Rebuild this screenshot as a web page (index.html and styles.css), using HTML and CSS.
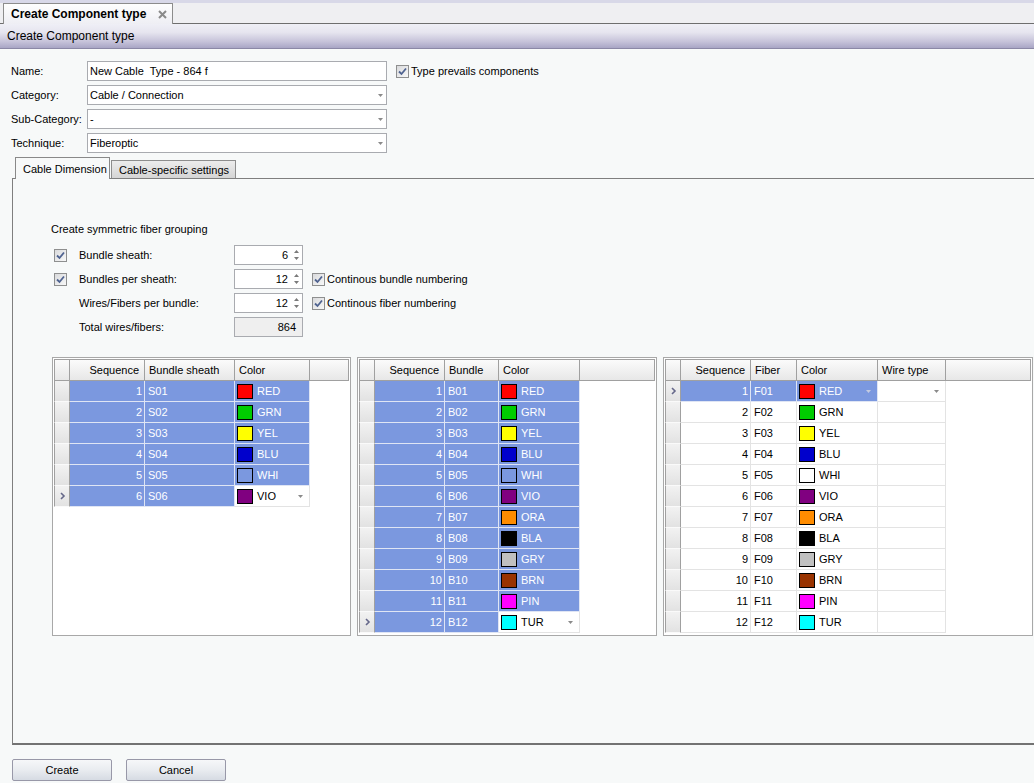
FILE: index.html
```html
<!DOCTYPE html>
<html>
<head>
<meta charset="utf-8">
<title>Create Component type</title>
<link rel="stylesheet" href="styles.css">
</head>
<body>
<div class="app">
  <div class="doctabs">
    <div class="doctab">Create Component type
      <svg class="close" width="9" height="9" viewBox="0 0 9 9"><path d="M1 1 L8 8 M8 1 L1 8" stroke="#8a8a8a" stroke-width="2"/></svg>
    </div>
  </div>
  <div class="titlebar">Create Component type</div>
  <div class="content">
    <div class="form">
      <div class="frow">
        <label>Name:</label>
        <div class="field">New Cable&nbsp; Type - 864 f</div>
        <span class="cb ml9"><svg width="11" height="11" viewBox="0 0 11 11"><path d="M2 5.5 L4.5 8 L9 2.5" fill="none" stroke="#4f6390" stroke-width="1.8"/></svg></span>
        <span class="cbtext">Type prevails components</span>
      </div>
      <div class="frow">
        <label>Category:</label>
        <div class="field">Cable / Connection<svg class="dd" width="5" height="3" viewBox="0 0 5 3"><path d="M0 0 H5 L2.5 3Z" fill="#8a8a8a"/></svg></div>
      </div>
      <div class="frow">
        <label>Sub-Category:</label>
        <div class="field">-<svg class="dd" width="5" height="3" viewBox="0 0 5 3"><path d="M0 0 H5 L2.5 3Z" fill="#8a8a8a"/></svg></div>
      </div>
      <div class="frow">
        <label>Technique:</label>
        <div class="field">Fiberoptic<svg class="dd" width="5" height="3" viewBox="0 0 5 3"><path d="M0 0 H5 L2.5 3Z" fill="#8a8a8a"/></svg></div>
      </div>
    </div>

    <div class="tabs">
      <div class="tab active">Cable Dimension</div>
      <div class="tab">Cable-specific settings</div>
    </div>

    <div class="panel">
      <div class="grp">Create symmetric fiber grouping</div>
      <div class="params">
        <span class="cb ml3"><svg width="11" height="11" viewBox="0 0 11 11"><path d="M2 5.5 L4.5 8 L9 2.5" fill="none" stroke="#4f6390" stroke-width="1.8"/></svg></span>
        <span>Bundle sheath:</span>
        <div class="spin"><span>6</span><svg class="sp" width="7" height="14" viewBox="0 0 7 14"><path d="M3.5 2 L6 5 H1Z M1 9 H6 L3.5 12Z" fill="#7a7a7a"/></svg></div>
        <span></span>

        <span class="cb ml3"><svg width="11" height="11" viewBox="0 0 11 11"><path d="M2 5.5 L4.5 8 L9 2.5" fill="none" stroke="#4f6390" stroke-width="1.8"/></svg></span>
        <span>Bundles per sheath:</span>
        <div class="spin"><span>12</span><svg class="sp" width="7" height="14" viewBox="0 0 7 14"><path d="M3.5 2 L6 5 H1Z M1 9 H6 L3.5 12Z" fill="#7a7a7a"/></svg></div>
        <span class="opt"><span class="cb ml9"><svg width="11" height="11" viewBox="0 0 11 11"><path d="M2 5.5 L4.5 8 L9 2.5" fill="none" stroke="#4f6390" stroke-width="1.8"/></svg></span><span class="cbtext">Continous bundle numbering</span></span>

        <span></span>
        <span>Wires/Fibers per bundle:</span>
        <div class="spin"><span>12</span><svg class="sp" width="7" height="14" viewBox="0 0 7 14"><path d="M3.5 2 L6 5 H1Z M1 9 H6 L3.5 12Z" fill="#7a7a7a"/></svg></div>
        <span class="opt"><span class="cb ml9"><svg width="11" height="11" viewBox="0 0 11 11"><path d="M2 5.5 L4.5 8 L9 2.5" fill="none" stroke="#4f6390" stroke-width="1.8"/></svg></span><span class="cbtext">Continous fiber numbering</span></span>

        <span></span>
        <span>Total wires/fibers:</span>
        <div class="spin ro"><span>864</span></div>
        <span></span>
      </div>

      <div class="grids">
        <div class="grid g1">
          <table>
            <colgroup><col class="c-rh"><col style="width:75px"><col style="width:90px"><col style="width:75px"><col></colgroup>
            <tr class="hd"><th></th><th class="num">Sequence</th><th>Bundle sheath</th><th>Color</th><th></th></tr>
            <tr class="sel"><td class="rh"></td><td class="num">1</td><td>S01</td><td><div class="cc"><span class="sw red"></span>RED</div></td></tr>
            <tr class="sel"><td class="rh"></td><td class="num">2</td><td>S02</td><td><div class="cc"><span class="sw grn"></span>GRN</div></td></tr>
            <tr class="sel"><td class="rh"></td><td class="num">3</td><td>S03</td><td><div class="cc"><span class="sw yel"></span>YEL</div></td></tr>
            <tr class="sel"><td class="rh"></td><td class="num">4</td><td>S04</td><td><div class="cc"><span class="sw blu"></span>BLU</div></td></tr>
            <tr class="sel"><td class="rh"></td><td class="num">5</td><td>S05</td><td><div class="cc"><span class="sw whi"></span>WHI</div></td></tr>
            <tr class="sel"><td class="rh cur"><svg width="14" height="20" viewBox="0 0 14 20"><path d="M5 7 L8 10 L5 13" fill="none" stroke="#65688a" stroke-width="1.6"/></svg></td><td class="num">6</td><td>S06</td><td class="edit"><div class="cc"><span class="sw vio"></span>VIO<svg class="dd" width="5" height="3" viewBox="0 0 5 3"><path d="M0 0 H5 L2.5 3Z" fill="#8a8a8a"/></svg></div></td></tr>
          </table>
        </div>

        <div class="grid g2">
          <table>
            <colgroup><col class="c-rh"><col style="width:70px"><col style="width:54px"><col style="width:81px"><col></colgroup>
            <tr class="hd"><th></th><th class="num">Sequence</th><th>Bundle</th><th>Color</th><th></th></tr>
            <tr class="sel"><td class="rh"></td><td class="num">1</td><td>B01</td><td><div class="cc"><span class="sw red"></span>RED</div></td></tr>
            <tr class="sel"><td class="rh"></td><td class="num">2</td><td>B02</td><td><div class="cc"><span class="sw grn"></span>GRN</div></td></tr>
            <tr class="sel"><td class="rh"></td><td class="num">3</td><td>B03</td><td><div class="cc"><span class="sw yel"></span>YEL</div></td></tr>
            <tr class="sel"><td class="rh"></td><td class="num">4</td><td>B04</td><td><div class="cc"><span class="sw blu"></span>BLU</div></td></tr>
            <tr class="sel"><td class="rh"></td><td class="num">5</td><td>B05</td><td><div class="cc"><span class="sw whi"></span>WHI</div></td></tr>
            <tr class="sel"><td class="rh"></td><td class="num">6</td><td>B06</td><td><div class="cc"><span class="sw vio"></span>VIO</div></td></tr>
            <tr class="sel"><td class="rh"></td><td class="num">7</td><td>B07</td><td><div class="cc"><span class="sw ora"></span>ORA</div></td></tr>
            <tr class="sel"><td class="rh"></td><td class="num">8</td><td>B08</td><td><div class="cc"><span class="sw bla"></span>BLA</div></td></tr>
            <tr class="sel"><td class="rh"></td><td class="num">9</td><td>B09</td><td><div class="cc"><span class="sw gry"></span>GRY</div></td></tr>
            <tr class="sel"><td class="rh"></td><td class="num">10</td><td>B10</td><td><div class="cc"><span class="sw brn"></span>BRN</div></td></tr>
            <tr class="sel"><td class="rh"></td><td class="num">11</td><td>B11</td><td><div class="cc"><span class="sw pin"></span>PIN</div></td></tr>
            <tr class="sel"><td class="rh cur"><svg width="14" height="20" viewBox="0 0 14 20"><path d="M5 7 L8 10 L5 13" fill="none" stroke="#65688a" stroke-width="1.6"/></svg></td><td class="num">12</td><td>B12</td><td class="edit"><div class="cc"><span class="sw tur"></span>TUR<svg class="dd" width="5" height="3" viewBox="0 0 5 3"><path d="M0 0 H5 L2.5 3Z" fill="#8a8a8a"/></svg></div></td></tr>
          </table>
        </div>

        <div class="grid g3">
          <table>
            <colgroup><col class="c-rh"><col style="width:70px"><col style="width:46px"><col style="width:81px"><col style="width:68px"><col></colgroup>
            <tr class="hd"><th></th><th class="num">Sequence</th><th>Fiber</th><th>Color</th><th>Wire type</th><th></th></tr>
            <tr class="sel"><td class="rh cur"><svg width="14" height="20" viewBox="0 0 14 20"><path d="M5 7 L8 10 L5 13" fill="none" stroke="#65688a" stroke-width="1.6"/></svg></td><td class="num">1</td><td>F01</td><td><div class="cc"><span class="sw red"></span>RED<svg class="dd" width="5" height="3" viewBox="0 0 5 3"><path d="M0 0 H5 L2.5 3Z" fill="#c4cbe0"/></svg></div></td><td class="edit"><div class="cc"><svg class="dd" width="5" height="3" viewBox="0 0 5 3"><path d="M0 0 H5 L2.5 3Z" fill="#8a8a8a"/></svg></div></td></tr>
            <tr><td class="rh"></td><td class="num">2</td><td>F02</td><td><div class="cc"><span class="sw grn"></span>GRN</div></td><td></td></tr>
            <tr><td class="rh"></td><td class="num">3</td><td>F03</td><td><div class="cc"><span class="sw yel"></span>YEL</div></td><td></td></tr>
            <tr><td class="rh"></td><td class="num">4</td><td>F04</td><td><div class="cc"><span class="sw blu"></span>BLU</div></td><td></td></tr>
            <tr><td class="rh"></td><td class="num">5</td><td>F05</td><td><div class="cc"><span class="sw whi"></span>WHI</div></td><td></td></tr>
            <tr><td class="rh"></td><td class="num">6</td><td>F06</td><td><div class="cc"><span class="sw vio"></span>VIO</div></td><td></td></tr>
            <tr><td class="rh"></td><td class="num">7</td><td>F07</td><td><div class="cc"><span class="sw ora"></span>ORA</div></td><td></td></tr>
            <tr><td class="rh"></td><td class="num">8</td><td>F08</td><td><div class="cc"><span class="sw bla"></span>BLA</div></td><td></td></tr>
            <tr><td class="rh"></td><td class="num">9</td><td>F09</td><td><div class="cc"><span class="sw gry"></span>GRY</div></td><td></td></tr>
            <tr><td class="rh"></td><td class="num">10</td><td>F10</td><td><div class="cc"><span class="sw brn"></span>BRN</div></td><td></td></tr>
            <tr><td class="rh"></td><td class="num">11</td><td>F11</td><td><div class="cc"><span class="sw pin"></span>PIN</div></td><td></td></tr>
            <tr><td class="rh"></td><td class="num">12</td><td>F12</td><td><div class="cc"><span class="sw tur"></span>TUR</div></td><td></td></tr>
          </table>
        </div>
      </div>
    </div>
  </div>
  <div class="footer">
    <button class="btn">Create</button>
    <button class="btn">Cancel</button>
  </div>
</div>
</body>
</html>
```

FILE: styles.css
```css
* { box-sizing: border-box; }
body {
  margin: 0;
  font-family: "Liberation Sans", Arial, sans-serif;
  font-size: 11px;
  color: #000;
}
.app {
  width: 1034px;
  height: 783px;
  display: flex;
  flex-direction: column;
  background: #f7f9f9;
  overflow: hidden;
}
.doctabs {
  height: 24px;
  flex: none;
  background: linear-gradient(#d8d8e8 0, #d8d8e8 3px, #efeff2 3px);
  border-bottom: 1px solid #6e6e6e;
  display: flex;
  align-items: flex-end;
  padding-left: 3px;
}
.doctab {
  width: 170px;
  height: 21px;
  margin-bottom: -1px;
  border: 1px solid #8c8c8c;
  border-bottom: none;
  background: linear-gradient(#fefefe, #eeeef4);
  font-weight: bold;
  font-size: 12px;
  display: flex;
  align-items: center;
  padding-left: 7px;
}
.close { margin-left: 12px; }
.titlebar {
  height: 25px;
  flex: none;
  background: linear-gradient(#efeff6 0%, #e6e5ef 35%, #c4c1d8 75%, #a9a6c5 100%);
  border-bottom: 1px solid #8b88a6;
  font-size: 12px;
  padding-left: 7px;
  display: flex;
  align-items: center;
}
.content {
  flex: 1;
  display: flex;
  flex-direction: column;
  padding-top: 12px;
}
.form {
  margin-left: 11px;
  display: flex;
  flex-direction: column;
  gap: 4px;
}
.frow {
  display: flex;
  align-items: center;
  height: 20px;
}
.frow label { width: 76px; }
.field {
  width: 300px;
  height: 20px;
  border: 1px solid #a9abb0;
  background: #fff;
  padding-left: 2px;
  display: flex;
  align-items: center;
}
.field .dd { margin-left: auto; margin-right: 3px; }
.cb {
  width: 13px;
  height: 13px;
  border: 1px solid #8e8f8f;
  background: linear-gradient(135deg, #d9dadc, #f8f8f8);
  display: inline-flex;
  align-items: center;
  justify-content: center;
  flex: none;
}
.ml9 { margin-left: 9px; }
.ml3 { margin-left: 3px; }
.cbtext { margin-left: 2px; }
.tabs {
  margin: 4px 0 -1px 15px;
  height: 22px;
  display: flex;
  align-items: flex-end;
  position: relative;
  z-index: 1;
}
.tab {
  padding-left: 7px;
  display: flex;
  align-items: center;
  border: 1px solid #8d8d8d;
  border-bottom: none;
}
.tab.active {
  width: 95px;
  height: 22px;
  background: #f7f9f9;
  border-color: #898989;
}
.tab:not(.active) {
  width: 125px;
  height: 18px;
  margin-left: 1px;
  margin-bottom: 1px;
  background: linear-gradient(#ececec, #d5d5d5);
}
.panel {
  flex: 1;
  margin-left: 12px;
  border: 1px solid #7f7f7f;
  border-right: none;
  border-bottom: 2px solid #737373;
  padding: 44px 0 0 38px;
}
.grp {
  height: 13px;
  line-height: 13px;
  margin-bottom: 9px;
}
.params {
  display: grid;
  grid-template-columns: 28px 155px 69px auto;
  grid-auto-rows: 20px;
  row-gap: 4px;
  align-items: center;
}
.opt { display: flex; align-items: center; }
.spin {
  height: 20px;
  border: 1px solid #a9abb0;
  background: #fff;
  display: flex;
  align-items: center;
  justify-content: flex-end;
  padding-right: 2px;
}
.spin .sp { margin-left: 5px; }
.spin.ro { background: #efefef; padding-right: 6px; }
.grids {
  display: flex;
  gap: 6px;
  margin-top: 20px;
  margin-left: 1px;
  align-items: flex-start;
}
.grid {
  height: 279px;
  border: 1px solid #a8a8a8;
  background: #fff;
  padding: 1px;
}
.g1 { width: 299px; }
.g2 { width: 300px; }
.g3 { width: 370px; }
.grid table {
  width: 100%;
  border-collapse: separate;
  border-spacing: 0;
  table-layout: fixed;
}
.c-rh { width: 16px; }
tr.hd { height: 22px; }
tr { height: 21px; }
th {
  font-weight: normal;
  text-align: left;
  padding: 0 4px;
  background: linear-gradient(#fbfbfb, #e7e7e7);
  border-top: 1px solid #a0a0a0;
  border-bottom: 1px solid #a0a0a0;
  border-right: 1px solid #a0a0a0;
  white-space: nowrap;
  overflow: hidden;
}
th:first-child { border-left: 1px solid #a0a0a0; }
th.num { text-align: right; padding-right: 5px; }
td {
  padding: 0 3px;
  border-right: 1px solid #e3e3e3;
  border-bottom: 1px solid #e3e3e3;
  white-space: nowrap;
  overflow: hidden;
}
td.num { text-align: right; padding-right: 2px; }
td.rh {
  padding: 0;
  border-left: 1px solid #a0a0a0;
  border-right: 1px solid #a0a0a0;
  border-bottom: 1px solid #fafafa;
  background: linear-gradient(#f2f2f2, #e2e2e2);
}
td.rh svg { display: block; margin-left: 1px; }
tr.sel td:not(.rh):not(.edit) {
  background: #7b98df;
  color: #fff;
  border-color: #dfe5f4;
}
.cc {
  display: flex;
  align-items: center;
  margin-left: -1px;
}
.cc .dd { margin-left: auto; margin-right: 3px; }
.sw {
  width: 16px;
  height: 15px;
  border: 1px solid #000;
  margin-right: 4px;
  flex: none;
}
.red { background: #ff0000; }
.grn { background: #00cc00; }
.yel { background: #ffff00; }
.blu { background: #0000cc; }
.whi { background: transparent; }
.vio { background: #800080; }
.ora { background: #ff8c00; }
.bla { background: #000; }
.gry { background: #c0c0c0; }
.brn { background: #993300; }
.pin { background: #ff00ff; }
.tur { background: #00ffff; }
.footer {
  height: 38px;
  flex: none;
  padding: 14px 0 0 12px;
  display: flex;
  gap: 14px;
  align-items: flex-start;
}
.btn {
  width: 100px;
  height: 22px;
  border: 1px solid #9898a8;
  border-radius: 2px;
  background: linear-gradient(#f6f7f9, #e9ecf0 50%, #d6dbe3);
  font-family: "Liberation Sans", Arial, sans-serif;
  font-size: 11px;
  color: #000;
  padding: 0;
}
```
